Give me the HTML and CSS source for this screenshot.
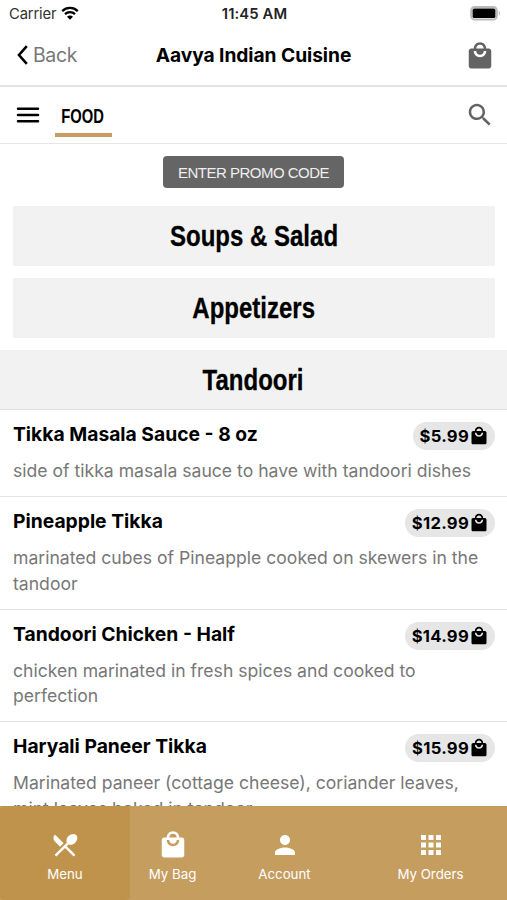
FILE: index.html
```html
<!DOCTYPE html>
<html lang="en">
<head>
    <meta charset="UTF-8">
    <meta name="viewport" content="width=device-width, initial-scale=1.0">
    <title>Aavya Indian Cuisine</title>
    <link rel="stylesheet" href="styles.css">
</head>
<body>
    <svg class="sprite" xmlns="http://www.w3.org/2000/svg">
        <symbol id="bag" viewBox="0 0 24 24"><path d="M19 6h-2c0-2.76-2.24-5-5-5S7 3.24 7 6H5c-1.1 0-1.99.9-1.99 2L3 20c0 1.1.9 2 2 2h14c1.1 0 2-.9 2-2V8c0-1.1-.9-2-2-2zm-7-3c1.66 0 3 1.34 3 3H9c0-1.66 1.34-3 3-3zm0 10c-2.76 0-5-2.24-5-5h2c0 1.66 1.34 3 3 3s3-1.34 3-3h2c0 2.76-2.24 5-5 5z"/></symbol>
    </svg>

    <div class="status-bar">
        <div class="carrier">
            <span>Carrier</span>
            <svg class="wifi" viewBox="0 0 18 14"><path d="M1.2 5.1a11.2 11.2 0 0 1 15.6 0" /><path d="M4 8.1a7.1 7.1 0 0 1 10 0" /><path class="dot" d="M9 13.7l-3-3a4.2 4.2 0 0 1 6 0z"/></svg>
        </div>
        <div class="time">11:45 AM</div>
        <svg class="battery" viewBox="0 0 31 15"><rect x="1.2" y="1" width="25.6" height="12.6" rx="3.6" fill="#fff" stroke="#b9b9b9" stroke-width="2"/><rect x="2.6" y="2.6" width="22.8" height="9.4" rx="1.6"/><path d="M28.8 5c1.5.5 1.5 4.2 0 4.7z" fill="#b9b9b9"/></svg>
    </div>

    <header class="header">
        <a class="back">
            <svg viewBox="0 0 11 20"><path d="M9.8 1.2L2 10l7.8 8.8"/></svg>
            <span>Back</span>
        </a>
        <h1>Aavya Indian Cuisine</h1>
        <svg class="icon header-bag"><use href="#bag"/></svg>
    </header>

    <nav class="tabs">
        <svg class="icon burger" viewBox="0 0 24 24"><path d="M4 7h16M4 12h16M4 17h16"/></svg>
        <a class="tab"><span>FOOD</span></a>
        <svg class="icon search" viewBox="0 0 24 24"><path d="M15.5 14h-.79l-.28-.27C15.41 12.59 16 11.11 16 9.5 16 5.91 13.09 3 9.5 3S3 5.91 3 9.5 5.91 16 9.5 16c1.61 0 3.09-.59 4.23-1.57l.27.28v.79l5 4.99L20.49 19l-4.99-5zm-6 0C7.01 14 5 11.99 5 9.5S7.01 5 9.5 5 14 7.01 14 9.5 11.99 14 9.5 14z"/></svg>
    </nav>

    <main class="content">
        <button class="promo">ENTER PROMO CODE</button>
        <h2 class="category"><span>Soups &amp; Salad</span></h2>
        <h2 class="category"><span>Appetizers</span></h2>
        <h2 class="category open"><span>Tandoori</span></h2>

        <div class="item">
            <div class="item-top">
                <h3>Tikka Masala Sauce - 8 oz</h3>
                <span class="price">$5.99<svg><use href="#bag"/></svg></span>
            </div>
            <p>side of tikka masala sauce to have with tandoori dishes</p>
        </div>
        <div class="item">
            <div class="item-top">
                <h3>Pineapple Tikka</h3>
                <span class="price">$12.99<svg><use href="#bag"/></svg></span>
            </div>
            <p>marinated cubes of Pineapple cooked on skewers in the<br>tandoor</p>
        </div>
        <div class="item">
            <div class="item-top">
                <h3>Tandoori Chicken - Half</h3>
                <span class="price">$14.99<svg><use href="#bag"/></svg></span>
            </div>
            <p>chicken marinated in fresh spices and cooked to<br>perfection</p>
        </div>
        <div class="item">
            <div class="item-top">
                <h3>Haryali Paneer Tikka</h3>
                <span class="price">$15.99<svg><use href="#bag"/></svg></span>
            </div>
            <p>Marinated paneer (cottage cheese), coriander leaves,<br>mint leaves baked in tandoor</p>
        </div>
    </main>

    <footer class="bottom-nav">
        <a class="active">
            <svg class="icon" viewBox="0 0 24 24"><path d="M8.1 13.34l2.83-2.83L3.91 3.5c-1.56 1.56-1.56 4.09 0 5.66l4.19 4.18zm6.78-1.81c1.53.71 3.68.21 5.27-1.38 1.91-1.91 2.28-4.65.81-6.12-1.46-1.46-4.2-1.1-6.12.81-1.59 1.59-2.09 3.74-1.38 5.27L3.7 19.87l1.41 1.41L12 14.41l6.88 6.88 1.41-1.41L13.41 13l1.47-1.47z"/></svg>
            <span>Menu</span>
        </a>
        <a>
            <svg class="icon"><use href="#bag"/></svg>
            <span>My Bag</span>
        </a>
        <a>
            <svg class="icon" viewBox="0 0 24 24"><path d="M12 12c2.21 0 4-1.79 4-4s-1.79-4-4-4-4 1.79-4 4 1.79 4 4 4zm0 2c-2.67 0-8 1.34-8 4v2h16v-2c0-2.66-5.33-4-8-4z"/></svg>
            <span>Account</span>
        </a>
        <a>
            <svg class="icon" viewBox="0 0 24 24"><path d="M4 8h4V4H4v4zm6 12h4v-4h-4v4zm-6 0h4v-4H4v4zm0-6h4v-4H4v4zm6 0h4v-4h-4v4zm6-10v4h4V4h-4zm-6 4h4V4h-4v4zm6 6h4v-4h-4v4zm0 6h4v-4h-4v4z"/></svg>
            <span>My Orders</span>
        </a>
    </footer>
</body>
</html>
```
FILE: styles.css
```css
* {
    box-sizing: border-box;
}
body {
    margin: 0;
    height: 900px;
    overflow: hidden;
    display: flex;
    flex-direction: column;
    background: #fff;
    color: #000;
    font-family: Inter, "Liberation Sans", sans-serif;
}
h1, h2, h3, p {
    margin: 0;
}
.sprite {
    display: none;
}
.icon {
    width: 30px;
    height: 30px;
    fill: currentColor;
}
.status-bar {
    height: 27px;
    flex: none;
    display: grid;
    grid-template-columns: 1fr auto 1fr;
    align-items: center;
    padding: 0 6px 0 9px;
    font-size: 14.8px;
}
.carrier {
    display: flex;
    align-items: center;
    gap: 5px;
    color: #333;
    letter-spacing: -0.15px;
}
.wifi {
    width: 18px;
    height: 14px;
    margin-top: -2px;
    fill: none;
    stroke: #000;
    stroke-width: 2.3;
}
.wifi .dot {
    fill: #000;
    stroke: none;
}
.time {
    margin-right: 1px;
    font-weight: 600;
    color: #222;
    letter-spacing: 0.1px;
}
.battery {
    width: 31px;
    height: 15px;
    justify-self: end;
}
.header {
    height: 60px;
    flex: none;
    display: grid;
    grid-template-columns: 1fr auto 1fr;
    align-items: center;
    padding: 0 12px 2px 17px;
    border-bottom: 2px solid #e4e4e4;
}
.back {
    display: flex;
    align-items: center;
    gap: 5px;
    font-size: 19.5px;
    letter-spacing: -0.4px;
    color: #777;
}
.back svg {
    width: 11px;
    height: 20px;
    fill: none;
    stroke: #000;
    stroke-width: 2.6;
}
.back span, .back svg {
    margin-top: -1px;
}
.header h1 {
    margin-right: 5px;
    font-size: 19.2px;
    font-weight: 650;
    letter-spacing: -0.05px;
}
.header-bag {
    justify-self: end;
    margin-top: 2px;
    color: #636363;
}
.tabs {
    height: 57px;
    flex: none;
    display: flex;
    align-items: center;
    padding: 0 12px 0 13px;
    border-bottom: 1px solid #e6e6e6;
}
.burger {
    stroke: #000;
    stroke-width: 2;
    stroke-linecap: round;
}
.tab {
    align-self: flex-start;
    width: 57px;
    height: 50px;
    margin-left: 12px;
    padding-top: 17px;
    border-bottom: 4px solid #c59d5f;
    font: bold 20.5px/24px "Liberation Sans", sans-serif;
    text-align: center;
}
/* condensed lettering */
.tab span {
    display: inline-block;
    margin-left: -2px;
    transform: scaleX(0.72);
}
.category span {
    display: inline-block;
    transform: scaleX(0.8);
    -webkit-text-stroke: 0.3px #000;
}
.search {
    margin-left: auto;
    color: #636363;
}
.content {
    flex: 1;
    min-height: 0;
    overflow: hidden;
    display: flex;
    flex-direction: column;
}
.promo {
    align-self: center;
    flex: none;
    width: 181px;
    height: 32px;
    margin: 12px 0 18px;
    padding: 0;
    border: none;
    border-radius: 4px;
    background: #656565;
    color: #efefef;
    font: 15px "Liberation Sans", sans-serif;
    letter-spacing: -0.5px;
}
.category {
    flex: none;
    height: 60px;
    margin: 0 12px 12px 13px;
    background: #f2f2f2;
    font: bold 30px/60px "Liberation Sans", sans-serif;
    text-align: center;
}
.category.open {
    height: 59px;
    margin: 0;
}
.item {
    flex: none;
    padding: 10px 12px 12.2px 13px;
    border-top: 1px solid #e2e2e2;
}
.item-top {
    display: flex;
    justify-content: space-between;
    height: 38.2px;
}
.item h3 {
    font-size: 19.3px;
    font-weight: 650;
    line-height: 28px;
}
.item p {
    font-size: 17.6px;
    line-height: 25.6px;
    color: #777;
}
.price {
    display: flex;
    align-items: center;
    height: 28px;
    margin-top: 2px;
    padding: 0 6px 0 7px;
    border-radius: 14px;
    background: #e6e6e6;
    font-size: 16.6px;
    font-weight: 700;
    letter-spacing: 0.3px;
}
.price svg {
    width: 20px;
    height: 20px;
}
.bottom-nav {
    flex: none;
    height: 94px;
    display: grid;
    grid-template-columns: 130px 85px 139px 153px;
    background: #c59d5f;
    color: #fff;
}
.bottom-nav a {
    display: flex;
    flex-direction: column;
    align-items: center;
    gap: 5px;
    padding-top: 24px;
    font-size: 13.3px;
    line-height: 18px;
}
.bottom-nav .active {
    background: #c0934c;
    border-radius: 4px;
}
```
